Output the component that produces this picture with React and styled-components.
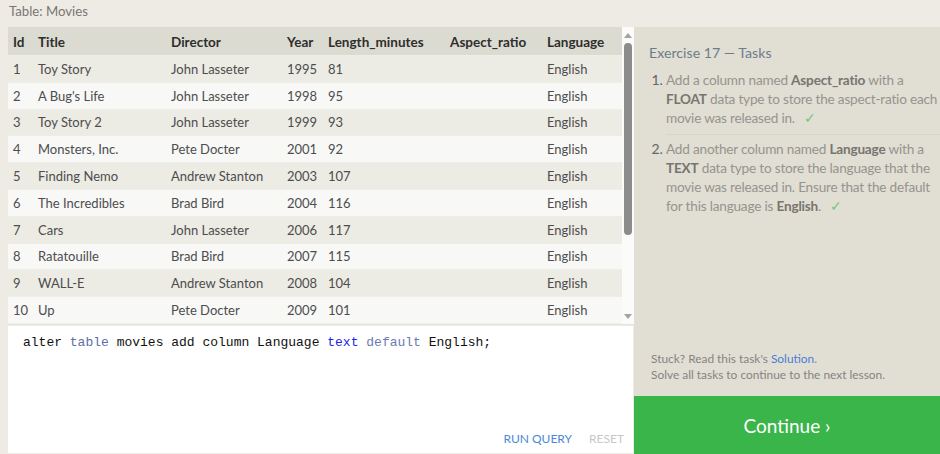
import React from 'react';
import styled, { createGlobalStyle } from 'styled-components';

const GlobalStyle = createGlobalStyle`
  html, body {
    margin: 0;
    padding: 0;
    background: #eeebe4;
    font-family: Lato, "Noto Sans", sans-serif;
  }
`;

const Page = styled.div`
  width: 940px;
  height: 454px;
  overflow: hidden;
  display: flex;
  flex-direction: column;
`;

const TopLabel = styled.div`
  height: 27px;
  padding-left: 9px;
  font-size: 13.2px;
  line-height: 22px;
  color: #777672;
`;

const Main = styled.div`
  flex: 1;
  display: grid;
  grid-template-columns: 626px 306px;
  margin-left: 8px;
`;

const LeftColumn = styled.div`
  display: flex;
  flex-direction: column;
`;

const TablePanel = styled.div`
  height: 297px;
  display: flex;
  overflow: hidden;
  border-bottom: 1px solid #e6e4de;
`;

const TableWrap = styled.div`
  width: 614px;
  overflow: hidden;
`;

const Table = styled.table`
  width: 614px;
  table-layout: fixed;
  border-collapse: collapse;
  font-size: 13px;
`;

const HeadCell = styled.th`
  height: 27px;
  padding: 1px 0 0 5px;
  text-align: left;
  font-weight: 700;
  font-size: 13.5px;
  color: #2e2e2e;
  background: #dcdbd1;
  white-space: nowrap;
`;

const Row = styled.tr`
  background: ${(p) => (p.$odd ? '#ecebe4' : '#f8f8f7')};
  border-top: 1px solid #eeede8;
`;

const Cell = styled.td`
  height: 25.8px;
  padding: 0 0 0 5px;
  color: #4d4d4d;
  white-space: nowrap;
`;

const Scrollbar = styled.div`
  width: 12px;
  background: #fbfbfa;
  display: flex;
  flex-direction: column;
  align-items: center;
`;

const Arrow = styled.div`
  width: 0;
  height: 0;
  border-left: 4px solid transparent;
  border-right: 4px solid transparent;
  ${(p) =>
    p.$up
      ? 'border-bottom: 5px solid #a3a3a3; margin-top: 6px;'
      : 'border-top: 5px solid #a3a3a3; margin-top: auto; margin-bottom: 5px;'}
`;

const Thumb = styled.div`
  width: 8px;
  height: 192px;
  margin-top: 5px;
  border-radius: 4px;
  background: #8c8c8c;
`;

const Editor = styled.div`
  height: 127px;
  margin-top: 1px;
  margin-right: 1px;
  background: #fff;
  display: flex;
  flex-direction: column;
`;

const Code = styled.pre`
  margin: 0;
  padding: 7px 0 0 15px;
  font-family: "Liberation Mono", monospace;
  font-size: 13px;
  line-height: 20px;
  color: #111;
`;

const Kw = styled.span`
  color: ${(p) => p.$tone};
`;

const EditorActions = styled.div`
  margin-top: auto;
  display: flex;
  justify-content: flex-end;
  gap: 17px;
  padding: 0 9px 7px 0;
  font-size: 12px;
`;

const Action = styled.span`
  color: ${(p) => (p.$muted ? '#c8c8c8' : '#4a87dc')};
`;

const RightPanel = styled.div`
  background: #e1ded4;
  display: flex;
  flex-direction: column;
  width: 306px;
`;

const TasksBody = styled.div`
  flex: 1;
  padding: 15px 0 0 15px;
  display: flex;
  flex-direction: column;
`;

const TasksTitle = styled.div`
  font-size: 14.2px;
  color: #6e7c8b;
  line-height: 22px;
`;

const TaskList = styled.ol`
  margin: 6px 0 0;
  padding: 0 0 0 17px;
  font-size: 13.6px;
  line-height: 19px;
  letter-spacing: -0.2px;
  color: #96948e;

  li::marker {
    color: #666560;
    font-size: 14px;
  }
`;

const TaskItem = styled.li`
  & + & {
    border-top: 1px solid #d7d4cb;
    margin-top: 6px;
    padding-top: 4px;
  }
`;

const TaskLine = styled.span`
  display: block;
  white-space: nowrap;
`;

const Strong = styled.b`
  color: #77756f;
`;

const Check = styled.span`
  color: #72c77d;
  margin-left: 9px;
`;

const Hint = styled.div`
  margin-top: auto;
  padding: 0 0 13px 2px;
  font-size: 11.9px;
  line-height: 16px;
  color: #86847f;
`;

const HintLink = styled.span`
  color: #4a7fd6;
`;

const ContinueButton = styled.div`
  height: 58px;
  background: #3ab54a;
  color: #fff;
  font-size: 19px;
  display: flex;
  align-items: center;
  justify-content: center;
`;

const columns = [
  ['Id', 25],
  ['Title', 133],
  ['Director', 116],
  ['Year', 41],
  ['Length_minutes', 122],
  ['Aspect_ratio', 97],
  ['Language', 80],
];

const movies = [
  [1, 'Toy Story', 'John Lasseter', 1995, 81],
  [2, "A Bug's Life", 'John Lasseter', 1998, 95],
  [3, 'Toy Story 2', 'John Lasseter', 1999, 93],
  [4, 'Monsters, Inc.', 'Pete Docter', 2001, 92],
  [5, 'Finding Nemo', 'Andrew Stanton', 2003, 107],
  [6, 'The Incredibles', 'Brad Bird', 2004, 116],
  [7, 'Cars', 'John Lasseter', 2006, 117],
  [8, 'Ratatouille', 'Brad Bird', 2007, 115],
  [9, 'WALL-E', 'Andrew Stanton', 2008, 104],
  [10, 'Up', 'Pete Docter', 2009, 101],
  [11, 'Toy Story 3', 'Lee Unkrich', 2010, 103],
];

// sql tokens with their highlight colour (null = plain)
const query = [
  ['alter ', null],
  ['table', '#5b6fa6'],
  [' movies add column Language ', null],
  ['text', '#1f1fe6'],
  [' ', null],
  ['default', '#6a7cb0'],
  [' English;', null],
];

export default function App() {
  return (
    <Page>
      <GlobalStyle />
      <TopLabel>Table: Movies</TopLabel>
      <Main>
        <LeftColumn>
          <TablePanel>
            <TableWrap>
              <Table>
                <colgroup>
                  {columns.map(([name, w]) => (
                    <col key={name} style={{ width: w }} />
                  ))}
                </colgroup>
                <thead>
                  <tr>
                    {columns.map(([name]) => (
                      <HeadCell key={name}>{name}</HeadCell>
                    ))}
                  </tr>
                </thead>
                <tbody>
                  {movies.map(([id, title, director, year, len], i) => (
                    <Row key={id} $odd={i % 2 === 0}>
                      <Cell>{id}</Cell>
                      <Cell>{title}</Cell>
                      <Cell>{director}</Cell>
                      <Cell>{year}</Cell>
                      <Cell>{len}</Cell>
                      <Cell></Cell>
                      <Cell>English</Cell>
                    </Row>
                  ))}
                </tbody>
              </Table>
            </TableWrap>
            <Scrollbar>
              <Arrow $up />
              <Thumb />
              <Arrow />
            </Scrollbar>
          </TablePanel>
          <Editor>
            <Code>
              {query.map(([text, tone], i) =>
                tone ? (
                  <Kw key={i} $tone={tone}>
                    {text}
                  </Kw>
                ) : (
                  text
                )
              )}
            </Code>
            <EditorActions>
              <Action>RUN QUERY</Action>
              <Action $muted>RESET</Action>
            </EditorActions>
          </Editor>
        </LeftColumn>
        <RightPanel>
          <TasksBody>
            <TasksTitle>Exercise 17 — Tasks</TasksTitle>
            <TaskList>
              <TaskItem>
                <TaskLine>
                  Add a column named <Strong>Aspect_ratio</Strong> with a
                </TaskLine>
                <TaskLine>
                  <Strong>FLOAT</Strong> data type to store the aspect-ratio each
                </TaskLine>
                <TaskLine>
                  movie was released in.<Check>✓</Check>
                </TaskLine>
              </TaskItem>
              <TaskItem>
                <TaskLine>
                  Add another column named <Strong>Language</Strong> with a
                </TaskLine>
                <TaskLine>
                  <Strong>TEXT</Strong> data type to store the language that the
                </TaskLine>
                <TaskLine>movie was released in. Ensure that the default</TaskLine>
                <TaskLine>
                  for this language is <Strong>English</Strong>.<Check>✓</Check>
                </TaskLine>
              </TaskItem>
            </TaskList>
            <Hint>
              Stuck? Read this task's <HintLink>Solution</HintLink>.
              <br />
              Solve all tasks to continue to the next lesson.
            </Hint>
          </TasksBody>
          <ContinueButton>Continue ›</ContinueButton>
        </RightPanel>
      </Main>
    </Page>
  );
}
